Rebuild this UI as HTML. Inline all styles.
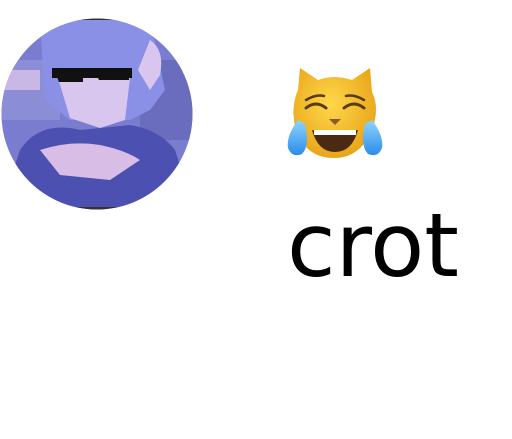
<!DOCTYPE html>
<html><head><meta charset="utf-8"><style>
html,body{margin:0;padding:0;background:#fff;width:512px;height:439px;overflow:hidden}
</style></head><body>
<svg width="512" height="439" viewBox="0 0 512 439" xmlns="http://www.w3.org/2000/svg">
<defs>
<clipPath id="c"><circle cx="97" cy="114" r="95.5"/></clipPath>
<radialGradient id="cat" cx="0.45" cy="0.4" r="0.6"><stop offset="0" stop-color="#ffd84a"/><stop offset="1" stop-color="#e9a51a"/></radialGradient>
<linearGradient id="tear" x1="0" y1="0" x2="0" y2="1"><stop offset="0" stop-color="#8fd3ff"/><stop offset="1" stop-color="#2b8de8"/></linearGradient>
</defs>
<g clip-path="url(#c)">
<rect x="0" y="18" width="194" height="192" fill="#7a7cd0"/>
<rect x="0" y="18" width="194" height="3" fill="#333"/>
<rect x="0" y="60" width="60" height="60" fill="#8b8ed6"/>
<rect x="0" y="70" width="40" height="20" fill="#c9b8e6"/>
<rect x="140" y="60" width="54" height="80" fill="#6a6cbe"/>
<path d="M40 20 L150 20 L165 90 L150 110 L130 120 L70 120 L45 100 Z" fill="#8a90e6"/>
<path d="M58 78 L130 78 L125 120 L100 128 L70 118 Z" fill="#d9c6ee"/>
<path d="M20 150 Q40 120 80 130 L130 125 Q160 130 175 150 L194 210 L0 210 Z" fill="#4c50b0"/>
<path d="M40 150 Q70 140 100 145 Q125 150 140 160 L110 180 L60 175 Z" fill="#d8bde6"/>
<path d="M150 40 Q165 50 160 75 L150 90 L138 70 Z" fill="#d9c6ee"/>
<rect x="52" y="68" width="80" height="10" fill="#111"/>
<path d="M55 72 h28 v10 h-24 z M95 72 h34 v8 h-30 z" fill="#111"/>
<rect x="0" y="207" width="194" height="3" fill="#333"/>
</g>
<g>
<path d="M298 90 L300 68 L318 80 Q334 74 352 80 L370 68 L372 92 Q380 108 372 130 Q360 158 334 158 Q306 158 296 130 Q290 108 298 90 Z" fill="url(#cat)"/>
<path d="M306 108 q10 -8 20 0 M344 108 q10 -8 20 0" stroke="#5a3a10" stroke-width="3" fill="none" stroke-linecap="round"/>
<path d="M306 100 q10 -6 18 -4 M346 96 q8 -2 18 4" stroke="#5a3a10" stroke-width="2.5" fill="none" stroke-linecap="round"/>
<path d="M329 119 h12 l-6 6 z" fill="#8a5a30"/>
<path d="M312 130 Q335 134 358 130 Q352 152 335 152 Q318 152 312 130 Z" fill="#4a2a10"/>
<rect x="314" y="130" width="42" height="5" fill="#fff"/>
<path d="M298 120 Q286 136 288 148 Q292 158 302 154 Q310 146 305 124 Z" fill="url(#tear)"/>
<path d="M372 120 Q384 136 382 148 Q378 158 368 154 Q360 146 365 124 Z" fill="url(#tear)"/>
</g>
<text x="287" y="276" font-family="DejaVu Sans, Liberation Sans, sans-serif" font-size="88" textLength="172" lengthAdjust="spacingAndGlyphs" fill="#000">crot</text>
</svg>
</body></html>
